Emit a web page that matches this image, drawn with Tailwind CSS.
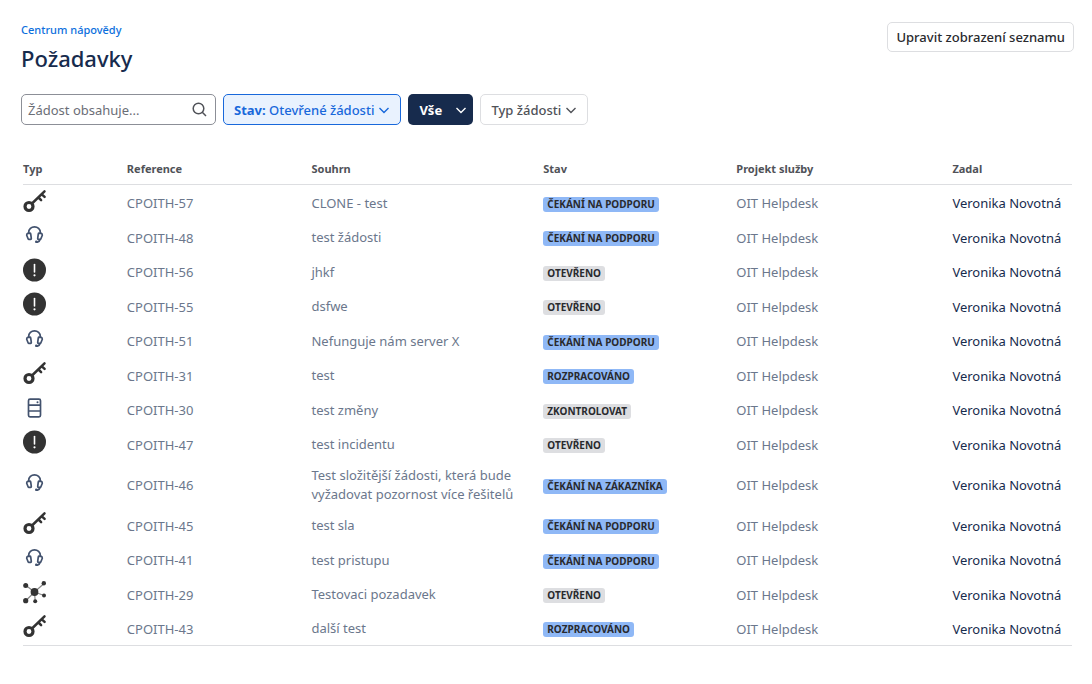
<!DOCTYPE html>
<html lang="cs">
<head>
    <meta charset="UTF-8">
    <meta name="viewport" content="width=device-width, initial-scale=1.0">
    <title>Požadavky</title>
    <script src="https://cdn.jsdelivr.net/npm/@tailwindcss/browser@4"></script>
</head>
<body class="min-h-screen bg-white font-['Noto_Sans',sans-serif] text-[13px] leading-[19px] text-[#172b4d]">
    <!-- Request type icons -->
    <svg class="hidden">
        <symbol id="icon-key" viewBox="0 0 24 24">
            <circle cx="6" cy="17.5" r="4" fill="none" stroke="#333" stroke-width="3.2"/>
            <path d="M9 14.5L21.5 2.3M15.5 8.5l2.6 2.6M18.8 5.3l2.8 2.6" fill="none" stroke="#333" stroke-width="2.5" stroke-linecap="round"/>
        </symbol>
        <symbol id="icon-headset" viewBox="0 0 24 24">
            <g fill="none" stroke="#42526e" stroke-width="1.7" stroke-linecap="round" stroke-linejoin="round">
                <path d="M5.7 10V9.2a5.8 5.4 0 0 1 11.6 0V10"/>
                <path d="M4.8 10.4l2-.2q.8 0 .9.7l.6 4.5q0 .8-.7.9l-1.600.1q-.7 0-.9-.6L3.700 12.200q-.1-1.400 1.100-1.800z"/>
                <path d="M18.200 10.400l-2-.2q-.8 0-.9.7l-.6 4.500q0 .8.7.9l1.600.1q.7 0 .9-.6l1.400-3.600q.1-1.400-1.100-1.800z"/>
                <path d="M17 16.500q-.5 2.300-2.600 2.600H13.500"/>
            </g>
            <circle cx="13.300" cy="18.800" r="1.300" fill="#42526e"/>
        </symbol>
        <symbol id="icon-alert" viewBox="0 0 24 24">
            <circle cx="11.5" cy="12" r="11.5" fill="#333"/>
            <path d="M11.5 6.5v7.5" stroke="#fff" stroke-width="1.6" stroke-linecap="round"/>
            <circle cx="11.5" cy="17.3" r="1.1" fill="#fff"/>
        </symbol>
        <symbol id="icon-server" viewBox="0 0 24 24">
            <g fill="none" stroke="#42526e" stroke-width="1.7">
                <rect x="5.5" y="3.2" width="12" height="17.6" rx="1.5"/>
                <path d="M5.5 9.2h12M5.5 15h12"/>
            </g>
            <circle cx="14.5" cy="6.3" r="1" fill="#42526e"/>
        </symbol>
        <symbol id="icon-network" viewBox="0 0 24 24">
            <path d="M11.5 12L3 5.5M11.5 12l9.5-8.5M11.5 12l9.5 3.5M11.5 12l.7 9M11.5 12L3 20.5" stroke="#888" stroke-width="1.2"/>
            <g fill="#333">
                <circle cx="11.5" cy="12" r="3.9"/>
                <circle cx="2.7" cy="5.5" r="2.5"/>
                <circle cx="20.8" cy="3.3" r="2.2"/>
                <circle cx="21" cy="15.5" r="2"/>
                <circle cx="12.2" cy="21.3" r="2"/>
                <circle cx="2.7" cy="20.7" r="2.6"/>
            </g>
        </symbol>
        <symbol id="icon-chevron" viewBox="0 0 16 16">
            <path d="M3.5 6L8 10.5 12.5 6" fill="none" stroke="currentColor" stroke-width="1.4"/>
        </symbol>
    </svg>

    <main class="pt-[22px] pr-[18px] pb-9 pl-[21px]">
        <header class="flex items-start justify-between">
            <div>
                <a href="#" class="block text-[11px] leading-4 font-medium text-[#0c6fdd] hover:underline">Centrum nápovědy</a>
                <h1 class="mt-[5px] text-[22px] leading-[30px] font-medium">Požadavky</h1>
            </div>
            <button type="button" class="h-[30px] rounded-[5px] border border-[#dddee1] px-2 font-medium text-[#292a2e] hover:bg-gray-50">Upravit zobrazení seznamu</button>
        </header>

        <!-- Filters -->
        <div class="mt-[21px] flex items-center gap-[7px]">
            <div class="flex h-[31px] w-[195px] items-center rounded-[5px] border border-[#8c8f97] pt-px pr-2 pl-1.5">
                <input type="text" aria-label="Žádost obsahuje" placeholder="Žádost obsahuje..." class="min-w-0 flex-1 outline-none placeholder:text-[#6b6e76]">
                <svg class="size-4 text-[#505258]" viewBox="0 0 16 16" fill="none" stroke="currentColor" stroke-width="1.5">
                    <circle cx="7.5" cy="6.5" r="5.3"/>
                    <path d="M11.3 10.3L15 14"/>
                </svg>
            </div>
            <button type="button" class="flex h-[31px] items-center gap-0.5 rounded-[5px] border border-[#1868db] bg-[#e9f2fe] pt-px pr-2 pl-2.5 font-medium text-[#1868db]">
                <span><b>Stav:</b> Otevřené žádosti</span>
                <svg class="size-4"><use href="#icon-chevron"/></svg>
            </button>
            <button type="button" class="flex h-[31px] w-[65px] items-center justify-between rounded-[5px] bg-[#172b4d] pt-px pr-1 pl-[11px] font-bold text-white">
                Vše
                <svg class="size-4"><use href="#icon-chevron"/></svg>
            </button>
            <button type="button" class="flex h-[31px] items-center gap-0.5 rounded-[5px] border border-[#dddee1] pt-px pr-2 pl-2.5 font-medium text-[#505258]">
                Typ žádosti
                <svg class="size-4"><use href="#icon-chevron"/></svg>
            </button>
        </div>

        <!-- Requests -->
        <div class="mt-7 px-0.5">
            <table class="w-full table-fixed border-collapse text-left">
                <thead class="border-b border-[#dddee1] text-[11px] leading-4 text-[#505258]">
                    <tr class="h-[31px]">
                        <th class="w-[9.9%] pt-0.5 font-bold">Typ</th>
                        <th class="w-[17.6%] pt-0.5 font-bold">Reference</th>
                        <th class="w-[22.1%] pt-0.5 font-bold">Souhrn</th>
                        <th class="w-[18.4%] pt-0.5 font-bold">Stav</th>
                        <th class="w-[20.6%] pt-0.5 font-bold">Projekt služby</th>
                        <th class="pt-0.5 font-bold">Zadal</th>
                    </tr>
                </thead>
                <tbody id="requests" class="border-b border-[#dddee1]"></tbody>
            </table>
        </div>
    </main>

    <script>
        const requests = [
            ['key', 'Přístup', 'CPOITH-57', 'CLONE - test', 'Čekání na podporu'],
            ['headset', 'Podpora', 'CPOITH-48', 'test žádosti', 'Čekání na podporu'],
            ['alert', 'Incident', 'CPOITH-56', 'jhkf', 'Otevřeno'],
            ['alert', 'Incident', 'CPOITH-55', 'dsfwe', 'Otevřeno'],
            ['headset', 'Podpora', 'CPOITH-51', 'Nefunguje nám server X', 'Čekání na podporu'],
            ['key', 'Přístup', 'CPOITH-31', 'test', 'Rozpracováno'],
            ['server', 'Změna', 'CPOITH-30', 'test změny', 'Zkontrolovat'],
            ['alert', 'Incident', 'CPOITH-47', 'test incidentu', 'Otevřeno'],
            ['headset', 'Podpora', 'CPOITH-46', 'Test složitější žádosti, která bude vyžadovat pozornost více řešitelů', 'Čekání na zákazníka'],
            ['key', 'Přístup', 'CPOITH-45', 'test sla', 'Čekání na podporu'],
            ['headset', 'Podpora', 'CPOITH-41', 'test pristupu', 'Čekání na podporu'],
            ['network', 'Síť', 'CPOITH-29', 'Testovaci pozadavek', 'Otevřeno'],
            ['key', 'Přístup', 'CPOITH-43', 'další test', 'Rozpracováno'],
        ];

        // Everything else is shown as in progress
        const greyStatuses = ['Otevřeno', 'Zkontrolovat'];

        document.getElementById('requests').innerHTML = requests.map(([icon, type, key, summary, status]) => `
            <tr class="odd:h-[35px] even:h-[34px]">
                <td class="pb-0.5"><svg class="size-6" role="img" aria-label="${type}"><use href="#icon-${icon}"/></svg></td>
                <td class="pt-1"><a href="#" class="text-[#6b778c] hover:underline">${key}</a></td>
                <td class="pt-1.5 pr-7 pb-[3px]"><a href="#" class="block text-[#6b778c] hover:underline">${summary}</a></td>
                <td class="pt-[5px]"><span class="block w-fit rounded-[3px] px-1 text-[10px] leading-[15px] font-bold text-[#292a2e] uppercase ${greyStatuses.includes(status) ? 'bg-[#dddee1]' : 'bg-[#8fb8f6]'}">${status}</span></td>
                <td class="pt-1 text-[#6b778c]">OIT Helpdesk</td>
                <td class="pt-1">Veronika Novotná</td>
            </tr>`).join('');
    </script>
</body>
</html>
